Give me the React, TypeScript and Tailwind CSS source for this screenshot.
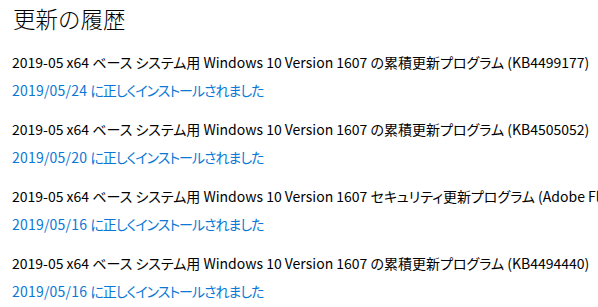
import React from "react";

const updates = [
	{
		title: "2019-05 x64 ベース システム用 Windows 10 Version 1607 の累積更新プログラム (KB4499177)",
		date: "2019/05/24",
	},
	{
		title: "2019-05 x64 ベース システム用 Windows 10 Version 1607 の累積更新プログラム (KB4505052)",
		date: "2019/05/20",
	},
	{
		title: "2019-05 x64 ベース システム用 Windows 10 Version 1607 セキュリティ更新プログラム (Adobe Flash Player)",
		date: "2019/05/16",
	},
	{
		title: "2019-05 x64 ベース システム用 Windows 10 Version 1607 の累積更新プログラム (KB4494440)",
		date: "2019/05/16",
	},
];

export default function App() {
	return (
		<div
			className="h-[307px] w-[598px] overflow-hidden bg-white pl-3 pt-[4px] text-black"
			style={{ fontFamily: '"Noto Sans CJK JP", "Noto Sans", sans-serif' }}
		>
			<h1 className="pl-[1px] text-[22.5px] font-light leading-[29px]">更新の履歴</h1>
			<ul className="mt-[19px] flex flex-col gap-[19px] [font-feature-settings:'palt']">
				{updates.map((u, i) => (
					<li key={i} className="flex flex-col items-start gap-[8px]">
						<p className="whitespace-nowrap text-[14px] leading-[20px]">{u.title}</p>
						<a className="whitespace-nowrap text-[14px] leading-[20px] text-[#0a78d4]" href="#">
							<span className="tracking-[0.2px]">{u.date}</span>{" "}
							<span className="tracking-[-1px]">に正しくインストールされました</span>
						</a>
					</li>
				))}
			</ul>
		</div>
	);
}
